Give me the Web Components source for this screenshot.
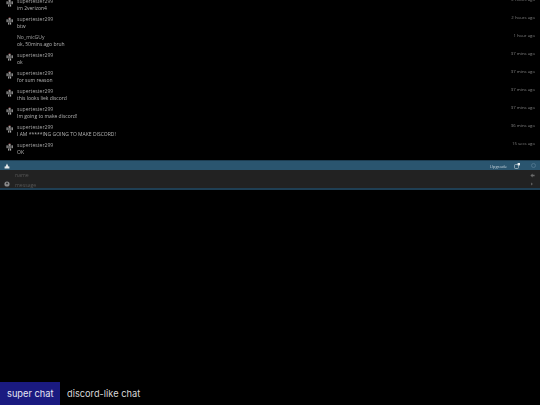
<!DOCTYPE html>
<html>
<head>
<meta charset="utf-8">
<title>super chat</title>
<style>
  html, body { margin: 0; height: 100%; background: #000; }
  body { font-family: "Open Sans", sans-serif; }
</style>
</head>
<body>
<chat-app>
  <chat-log>
    <chat-message name="supertester299" text="im 2verizon4" time="2 hours ago" avatar></chat-message>
    <chat-message name="supertester299" text="btw" time="2 hours ago" avatar></chat-message>
    <chat-message name="No_micGUy" text="ok, 50mins ago bruh" time="1 hour ago"></chat-message>
    <chat-message name="supertester299" text="ok" time="37 mins ago" avatar></chat-message>
    <chat-message name="supertester299" text="for sum reason" time="37 mins ago" avatar></chat-message>
    <chat-message name="supertester299" text="this looks liek discord" time="37 mins ago" avatar></chat-message>
    <chat-message name="supertester299" text="Im going to make discord!" time="37 mins ago" avatar></chat-message>
    <chat-message name="supertester299" text="I AM *****ING GOING TO MAKE DISCORD!" time="36 mins ago" avatar></chat-message>
    <chat-message name="supertester299" text="OK" time="15 secs ago" avatar></chat-message>
  </chat-log>
  <chat-toolbar></chat-toolbar>
  <chat-form></chat-form>
  <title-bar title-text="super chat" subtitle="discord-like chat"></title-bar>
</chat-app>

<script>
// page shell: chat on top, caption bar pinned to the bottom
class ChatApp extends HTMLElement {
  constructor() {
    super();
    this.attachShadow({ mode: 'open' });
    this.shadowRoot.innerHTML = `
      <style>
        :host { display: flex; flex-direction: column; height: 405px; width: 540px; overflow: hidden; background: #000; }
        ::slotted(title-bar) { margin-top: auto; }
      </style>
      <slot></slot>
    `;
  }
}

// messages stick to the bottom, the oldest one gets cut off at the top
class ChatLog extends HTMLElement {
  constructor() {
    super();
    this.attachShadow({ mode: 'open' });
    this.shadowRoot.innerHTML = `
      <style>
        :host { display: flex; flex-direction: column; justify-content: flex-end; height: 160px; overflow: hidden; box-sizing: border-box; filter: blur(.3px); }
      </style>
      <slot></slot>
    `;
  }
}

class ChatMessage extends HTMLElement {
  constructor() {
    super();
    this.attachShadow({ mode: 'open' });
  }

  connectedCallback() {
    const avatar = this.hasAttribute('avatar') ? `
      <svg width="8" height="8" viewBox="0 0 10 9">
        <rect x="3.4" y="0" width="2.2" height="1" fill="#8a3a3a"/>
        <rect x="3.2" y="1" width="2.6" height="2" fill="#bbb"/>
        <rect x="0.6" y="2.4" width="1.6" height="3.6" fill="#9a9a9a"/>
        <rect x="6.8" y="2.4" width="1.8" height="3.6" fill="#9a9a9a"/>
        <rect x="2.6" y="3.2" width="3.8" height="3.4" fill="#666"/>
        <rect x="2.6" y="6.6" width="1.5" height="2.4" fill="#aaa"/>
        <rect x="4.9" y="6.6" width="1.5" height="2.4" fill="#aaa"/>
      </svg>` : '';
    this.shadowRoot.innerHTML = `
      <style>
        :host { display: grid; grid-template-columns: 17px 1fr auto; height: 18px; flex: none; padding-right: 5px; color: #b4b4b4; font-size: 5px; line-height: 7px; }
        .pic { padding: 1px 0 0 6px; }
        .pic svg { display: block; }
        .body { min-width: 0; }
        .line { white-space: nowrap; }
        .name { color: #a2a2a2; font-size: 5.1px; }
        time { color: #808080; font-size: 4.3px; line-height: 4px; margin-top: -1px; }
      </style>
      <div class="pic">${avatar}</div>
      <div class="body">
        <div class="line name">${this.getAttribute('name')}</div>
        <div class="line">${this.getAttribute('text')}</div>
      </div>
      <time>${this.getAttribute('time')}</time>
    `;
  }
}

class ChatToolbar extends HTMLElement {
  constructor() {
    super();
    this.attachShadow({ mode: 'open' });
    this.shadowRoot.innerHTML = `
      <style>
        :host { display: flex; align-items: center; height: 10px; background: #2a556f; border-top: 1px solid #1c3d52; box-sizing: border-box; color: #c4d0d8; font-size: 4.3px; padding: 0 4.5px 0 4px; filter: blur(.25px); }
        .up { margin-left: auto; margin-right: 7px; }
        svg { display: block; }
        .ext { margin-right: 10.5px; }
      </style>
      <svg width="6" height="6" viewBox="0 0 6 6"><path d="M3 .4 4.4 3.6H5.4V5.4H.6V3.6H1.6Z" fill="#e4e8ea"/></svg>
      <span class="up">Upgrade</span>
      <svg class="ext" width="6" height="6" viewBox="0 0 6 6">
        <rect x=".5" y="1.5" width="4" height="4" rx="1" fill="none" stroke="#b8c6cf" stroke-width=".7"/>
        <rect x="3.6" y="0" width="2.4" height="2.4" fill="#e8eef1"/>
      </svg>
      <svg width="5" height="5" viewBox="0 0 5 5"><circle cx="2.5" cy="2.5" r="2" fill="none" stroke="#5a7f96" stroke-width=".7"/></svg>
    `;
  }
}

class ChatForm extends HTMLElement {
  constructor() {
    super();
    this.attachShadow({ mode: 'open' });
    this.shadowRoot.innerHTML = `
      <style>
        :host { display: grid; grid-template-columns: 15px 1fr 12px; grid-template-rows: 10px 8px; height: 20px; box-sizing: border-box; background: #222; border-bottom: 2px solid #1f3f54; color: #555; font-size: 5.2px; line-height: 10px; filter: blur(.25px); }
        .ico { display: flex; align-items: center; justify-content: center; padding-right: 2px; }
        .ico svg { display: block; }
        .side { display: flex; align-items: center; justify-content: center; padding-right: 4px; }
      </style>
      <div></div>
      <div>name</div>
      <div class="side">
        <svg width="5" height="5" viewBox="0 0 5 5"><path d="M.4 2.5 2.6.6V1.8H4.6V3.2H2.6V4.4Z" fill="#6a6a6a"/></svg>
      </div>
      <div class="ico">
        <svg width="6" height="6" viewBox="0 0 6 6"><circle cx="3" cy="3" r="2.6" fill="#8a8a8a"/><circle cx="3" cy="2.6" r="1" fill="#333"/></svg>
      </div>
      <div>message</div>
      <div class="side">
        <svg width="4" height="4" viewBox="0 0 4 4"><path d="M1 .6 3 2 1 3.4Z" fill="#5e5e5e"/></svg>
      </div>
    `;
  }
}

class TitleBar extends HTMLElement {
  constructor() {
    super();
    this.attachShadow({ mode: 'open' });
  }

  connectedCallback() {
    this.shadowRoot.innerHTML = `
      <style>
        :host { display: flex; align-items: center; height: 23px; font-family: Inter, "Liberation Sans", sans-serif; font-size: 9.25px; color: #d8d8d8; background: #000; }
        .name { background: #1a1a80; color: #e6e6f4; height: 100%; display: flex; align-items: center; padding: 0 7px; box-sizing: border-box; width: 60px; white-space: nowrap; }
        .sub { padding-left: 7px; white-space: nowrap; }
      </style>
      <div class="name">${this.getAttribute('title-text')}</div>
      <div class="sub">${this.getAttribute('subtitle')}</div>
    `;
  }
}

customElements.define('chat-app', ChatApp);
customElements.define('chat-log', ChatLog);
customElements.define('chat-message', ChatMessage);
customElements.define('chat-toolbar', ChatToolbar);
customElements.define('chat-form', ChatForm);
customElements.define('title-bar', TitleBar);
</script>
</body>
</html>
